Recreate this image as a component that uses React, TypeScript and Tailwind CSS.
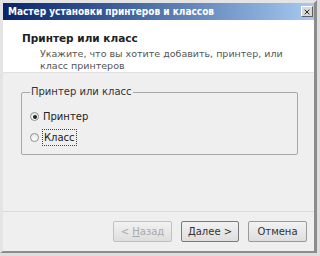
import { X } from 'lucide-react';

const font = { fontFamily: '"DejaVu Sans", Verdana, sans-serif' };
const titleFont = { fontFamily: '"DejaVu Sans Condensed", "DejaVu Sans", sans-serif' };

const Radio = ({ checked }: { checked?: boolean }) => (
  <span className="w-[9px] h-[9px] rounded-full border border-[#8e8e8e] bg-gradient-to-b from-[#e8e8e8] to-white flex items-center justify-center shrink-0">
    {checked && <span className="w-[4px] h-[4px] rounded-full bg-[#222]" />}
  </span>
);

const App = () => {
  return (
    <div className="w-[320px] h-[256px] bg-[#dedede] overflow-hidden" style={font}>
      <div className="w-[317px] h-[253px] flex flex-col bg-[#efefef] border-t-[3px] border-l-[3px] border-[#e4e4e4] border-r-[3px] border-r-[#8c8c8c] border-b-[2px] border-b-[#8c8c8c]">
        {/* title bar */}
        <div className="h-[17px] flex items-center justify-between pl-[5px] pr-[1px] bg-gradient-to-r from-[#0a246a] to-[#a6caf0]">
          <span className="text-white font-bold text-[10px] leading-none" style={titleFont}>
            Мастер установки принтеров и классов
          </span>
          <span className="w-[12px] h-[11px] bg-[#d8d8d8] border border-t-white border-l-white border-r-[#606060] border-b-[#606060] flex items-center justify-center">
            <X size={8} strokeWidth={3} className="text-[#222]" />
          </span>
        </div>

        {/* header */}
        <div className="bg-white h-[53px] border-b border-[#e0e0e0] pl-[19px] pt-[12px] text-[#222]">
          <div className="font-bold text-[10.5px] leading-[12px]">Принтер или класс</div>
          <div className="pl-[18px] pt-[4px] text-[9.5px] leading-[12px] text-[#555] w-[280px]">
            Укажите, что вы хотите добавить, принтер, или класс принтеров
          </div>
        </div>

        {/* body */}
        <div className="flex-1 pl-[18px] pr-[16px] pt-[19px]">
          <div className="relative h-[63px] border border-[#a8a8a8] rounded-[2px] pt-[15px] pl-[8px] text-[10px] text-[#222]">
            <span className="absolute -top-[7px] left-[8px] px-[1px] bg-[#efefef] leading-[12px] text-[#333]">Принтер или класс</span>
            <div className="flex flex-col gap-[4px]">
              <div className="flex items-center gap-[4px] h-[17px]">
                <Radio checked />
                <span>Принтер</span>
              </div>
              <div className="flex items-center gap-[3px] h-[17px]">
                <Radio />
                <span className="h-[17px] flex items-center border border-dotted border-[#444] px-[1px]">Класс</span>
              </div>
            </div>
          </div>
        </div>

        {/* footer */}
        <div className="h-[40px] border-t border-[#dadada] flex items-start justify-end gap-[9px] pr-[7px] pt-[9px] text-[10px]">
          <button className="w-[59px] h-[21px] rounded-[2px] border border-[#c0c0c0] bg-gradient-to-b from-[#f2f2f2] to-[#dedede] text-[#a8a8a8]">
            &lt; <span className="underline">Н</span>азад
          </button>
          <button className="w-[58px] h-[21px] rounded-[2px] border border-[#7a7a7a] bg-gradient-to-b from-[#f2f2f2] to-[#dedede] text-[#333]">
            <span className="underline">Д</span>алее &gt;
          </button>
          <button className="w-[59px] h-[21px] rounded-[2px] border border-[#9a9a9a] bg-gradient-to-b from-[#f2f2f2] to-[#dedede] text-[#333]">
            Отмена
          </button>
        </div>
      </div>
    </div>
  );
};

export default App;
